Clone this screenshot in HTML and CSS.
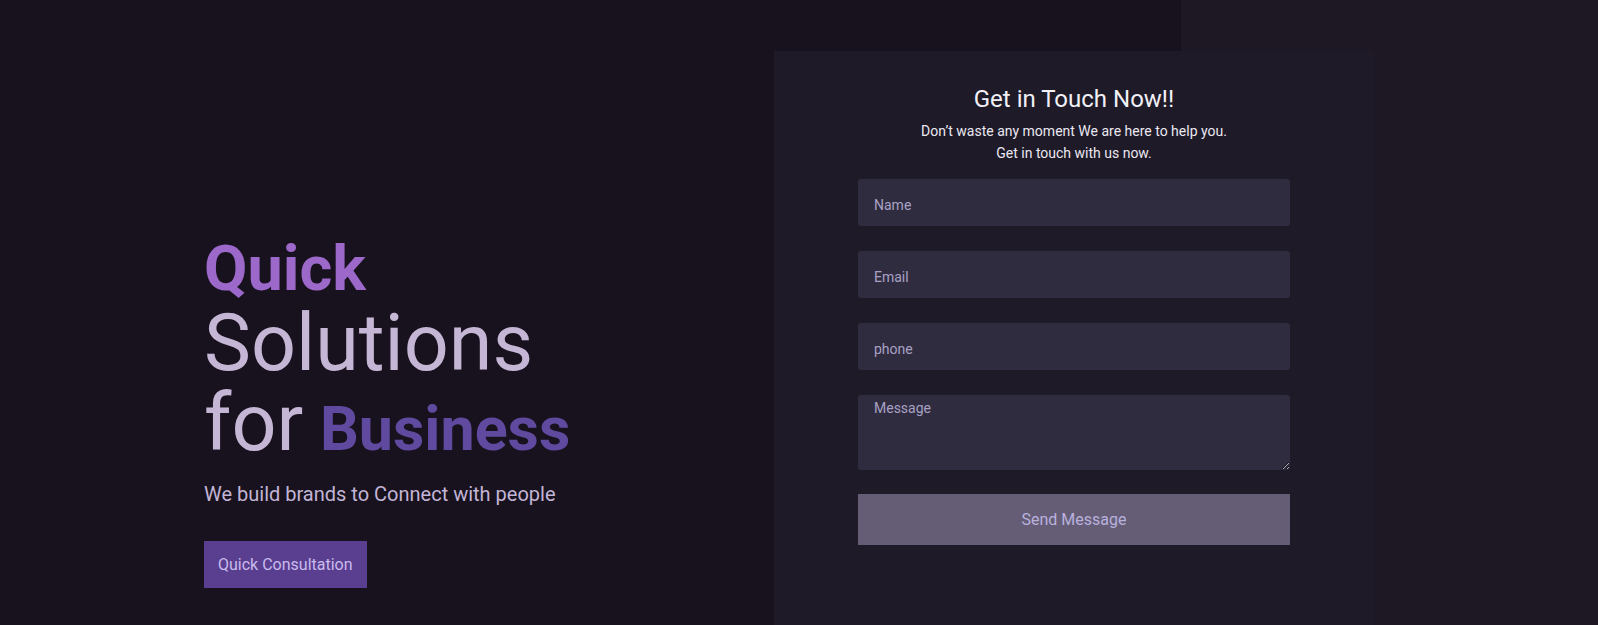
FILE: index.html
```html
<!DOCTYPE html>
<html lang="en">
<head>
<meta charset="utf-8">
<title>Quick Solutions for Business</title>
<link rel="stylesheet" href="styles.css">
</head>
<body>
<main class="page">
  <section class="intro">
    <h1 class="headline"><span class="quick">Quick</span><br>Solutions<br>for <span class="biz">Business</span></h1>
    <p class="tagline">We build brands to Connect with people</p>
    <a class="cta" href="#">Quick Consultation</a>
  </section>
  <section class="card">
    <h2 class="card-title">Get in Touch Now!!</h2>
    <p class="card-sub">Don’t waste any moment We are here to help you.<br>Get in touch with us now.</p>
    <form class="form">
      <input class="field" type="text" placeholder="Name">
      <input class="field" type="email" placeholder="Email">
      <input class="field" type="text" placeholder="phone">
      <textarea class="field area" placeholder="Message"></textarea>
      <button class="send" type="button">Send Message</button>
    </form>
  </section>
</main>
</body>
</html>
```
FILE: styles.css
```css
html, body {
  margin: 0;
  padding: 0;
}
body {
  font-family: Roboto, "Liberation Sans", sans-serif;
  background: linear-gradient(to right, #18121e 0, #18121e 1181px, #1d1824 1181px, #1d1824 100%);
  min-height: 100vh;
}
.page {
  display: flex;
  min-height: 100vh;
  box-sizing: border-box;
  padding-top: 51px;
}
.intro {
  width: 774px;
  box-sizing: border-box;
  padding-left: 204px;
  padding-top: 172px;
  flex-shrink: 0;
}
.headline {
  margin: 0;
  font-size: 79px;
  line-height: 80px;
  font-weight: 400;
  color: #c4b6d4;
  word-spacing: -3px;
}
.quick {
  font-size: 63px;
  line-height: 60px;
  font-weight: 700;
  color: #9c68c9;
}
.biz {
  font-size: 61px;
  line-height: 60px;
  font-weight: 700;
  color: #5f4a9f;
  word-spacing: 0;
}
.tagline {
  margin: 16px 0 0;
  font-size: 20px;
  line-height: 30px;
  color: #c3b5d6;
}
.cta {
  display: inline-flex;
  align-items: center;
  height: 47px;
  margin-top: 32px;
  padding: 0 14px;
  background: #5a3f91;
  color: #c9bbec;
  font-size: 16px;
  text-decoration: none;
}
.card {
  width: 600px;
  flex-shrink: 0;
  background: #1e1a27;
  box-sizing: border-box;
  padding: 34px 84px 0;
  text-align: center;
}
.card-title {
  margin: 0;
  font-size: 24px;
  line-height: 29px;
  font-weight: 400;
  color: #f2f0f7;
}
.card-sub {
  margin: 7px 0 0;
  font-size: 14px;
  line-height: 21.5px;
  color: #ebe8f2;
}
.form {
  display: flex;
  flex-direction: column;
  gap: 25px;
  margin-top: 15px;
}
.field {
  display: block;
  width: 100%;
  box-sizing: border-box;
  height: 47px;
  border: none;
  border-radius: 3px;
  background: #302c40;
  padding: 5px 16px 0;
  font-family: Roboto, "Liberation Sans", sans-serif;
  font-size: 14px;
  color: #d8d2ea;
  outline: none;
}
.field::placeholder {
  color: #a8a1c4;
}
.area {
  height: 75px;
  padding-top: 5px;
  resize: vertical;
}
.send {
  height: 51px;
  border: none;
  background: #645d75;
  color: #b9b1de;
  font-family: Roboto, "Liberation Sans", sans-serif;
  font-size: 16px;
  margin-top: -1px;
}
```
